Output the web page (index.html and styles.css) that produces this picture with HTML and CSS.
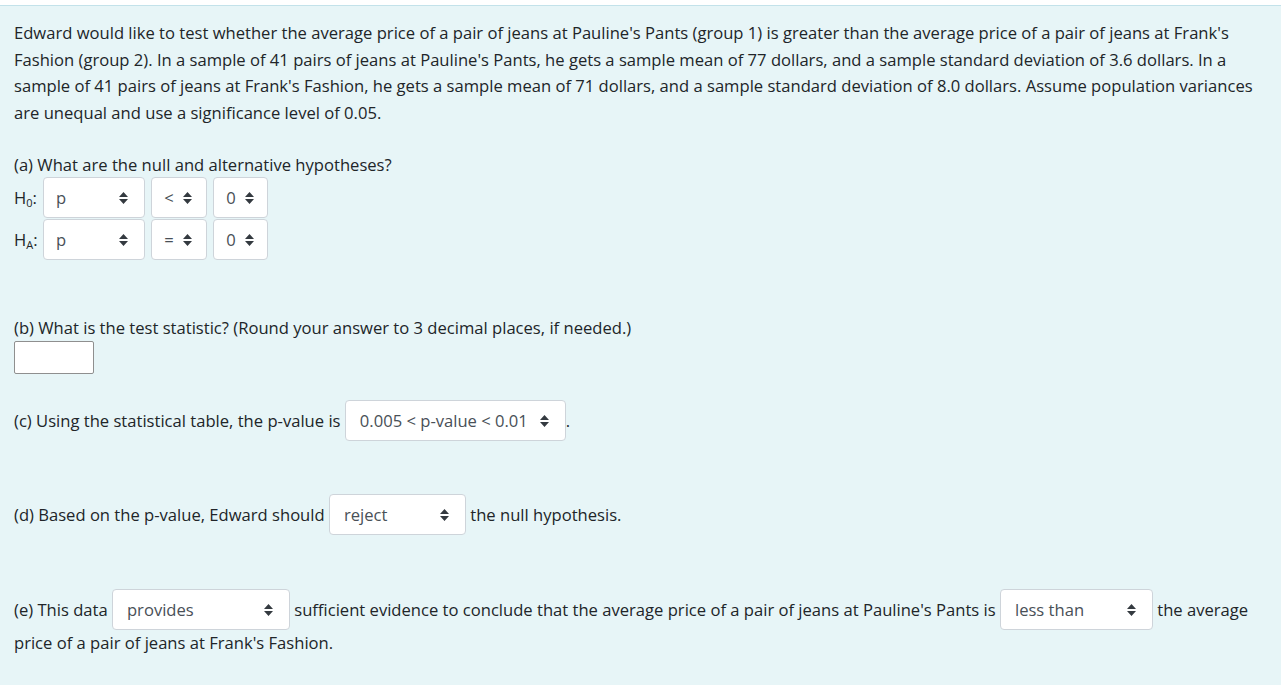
FILE: index.html
```html
<!DOCTYPE html>
<html lang="en">
<head>
<meta charset="utf-8">
<title>Hypothesis test</title>
<link rel="stylesheet" href="styles.css">
</head>
<body>
<div class="panel">
  <p class="intro">Edward would like to test whether the average price of a pair of jeans at Pauline's Pants (group 1) is greater than the average price of a pair of jeans at Frank's Fashion (group 2). In a sample of 41 pairs of jeans at Pauline's Pants, he gets a sample mean of 77 dollars, and a sample standard deviation of 3.6 dollars. In a sample of 41 pairs of jeans at Frank's Fashion, he gets a sample mean of 71 dollars, and a sample standard deviation of 8.0 dollars. Assume population variances are unequal and use a significance level of 0.05.</p>

  <div class="part-a">
    <p class="line">(a) What are the null and alternative hypotheses?</p>
    <div class="hrow first">
      <span class="hlabel">H<sub>0</sub>:</span>
      <div class="sel w-var"><span class="val">p</span><svg class="arr" width="9" height="12" viewBox="0 0 9 12"><path d="M4.5 0L9 5H0Z M4.5 12L0 7H9Z"/></svg></div>
      <div class="sel w-op"><span class="val center">&lt;</span><svg class="arr" width="9" height="12" viewBox="0 0 9 12"><path d="M4.5 0L9 5H0Z M4.5 12L0 7H9Z"/></svg></div>
      <div class="sel w-num"><span class="val center">0</span><svg class="arr" width="9" height="12" viewBox="0 0 9 12"><path d="M4.5 0L9 5H0Z M4.5 12L0 7H9Z"/></svg></div>
    </div>
    <div class="hrow">
      <span class="hlabel">H<sub>A</sub>:</span>
      <div class="sel w-var"><span class="val">p</span><svg class="arr" width="9" height="12" viewBox="0 0 9 12"><path d="M4.5 0L9 5H0Z M4.5 12L0 7H9Z"/></svg></div>
      <div class="sel w-op"><span class="val center">=</span><svg class="arr" width="9" height="12" viewBox="0 0 9 12"><path d="M4.5 0L9 5H0Z M4.5 12L0 7H9Z"/></svg></div>
      <div class="sel w-num"><span class="val center">0</span><svg class="arr" width="9" height="12" viewBox="0 0 9 12"><path d="M4.5 0L9 5H0Z M4.5 12L0 7H9Z"/></svg></div>
    </div>
  </div>

  <div class="part-b">
    <p class="line">(b) What is the test statistic? (Round your answer to 3 decimal places, if needed.)</p>
    <div class="answer-box"></div>
  </div>

  <p class="part part-c">(c) Using the statistical table, the p-value is <span class="sel inl w-p"><span class="val">0.005 &lt; p-value &lt; 0.01</span><svg class="arr" width="9" height="12" viewBox="0 0 9 12"><path d="M4.5 0L9 5H0Z M4.5 12L0 7H9Z"/></svg></span>.</p>

  <p class="part part-d">(d) Based on the p-value, Edward should <span class="sel inl w-rej"><span class="val">reject</span><svg class="arr" width="9" height="12" viewBox="0 0 9 12"><path d="M4.5 0L9 5H0Z M4.5 12L0 7H9Z"/></svg></span> the null hypothesis.</p>

  <p class="part part-e">(e) This data <span class="sel inl w-prov"><span class="val">provides</span><svg class="arr" width="9" height="12" viewBox="0 0 9 12"><path d="M4.5 0L9 5H0Z M4.5 12L0 7H9Z"/></svg></span> sufficient evidence to conclude that the average price of a pair of jeans at Pauline's Pants is <span class="sel inl w-less"><span class="val">less than</span><svg class="arr" width="9" height="12" viewBox="0 0 9 12"><path d="M4.5 0L9 5H0Z M4.5 12L0 7H9Z"/></svg></span> the average price of a pair of jeans at Frank's Fashion.</p>
</div>
</body>
</html>
```

FILE: styles.css
```css
html, body {
  margin: 0;
  padding: 0;
  background: #ffffff;
}

body {
  font-family: "Open Sans", "Noto Sans", sans-serif;
  font-size: 16.6px;
  color: #212529;
}

.panel {
  margin-top: 5px;
  border-top: 1px solid #c3e2ea;
  background: #e7f5f7;
  padding: 14px 14px 40px 14px;
  min-height: 640px;
  box-sizing: border-box;
}

p {
  margin: 0;
}

.intro {
  line-height: 26.5px;
}

.line {
  line-height: 26px;
}

.part-a {
  margin-top: 26px;
}

.hrow {
  display: flex;
  align-items: center;
  gap: 6px;
  margin-bottom: 1px;
}

.hrow.first {
  margin-top: -1px;
}

.hlabel {
  width: 23px;
  line-height: 41px;
}

.hlabel sub {
  font-size: 11px;
  vertical-align: -3px;
  line-height: 0;
}

.sel {
  display: flex;
  align-items: center;
  box-sizing: border-box;
  height: 41px;
  background: #ffffff;
  border: 1px solid #ced4da;
  border-radius: 4px;
  padding: 0 16px 0 12px;
  color: #495057;
  line-height: 20px;
}

.sel .val {
  flex: 1;
  white-space: nowrap;
  margin-top: 1px;
}

.sel .val.center {
  text-align: center;
  padding-right: 5px;
}

.sel .arr {
  fill: #343a40;
  flex: none;
}

.sel.inl {
  display: inline-flex;
  vertical-align: baseline;
  padding-left: 14px;
}

.w-var { width: 102px; }
.w-op { width: 56px; padding-left: 8px; padding-right: 14px; }
.w-num { width: 55px; padding-left: 8px; padding-right: 13px; }
.w-p { width: 221px; }
.w-rej { width: 137px; }
.w-prov { width: 178px; }
.w-less { width: 153px; }

.part-b {
  margin-top: 55px;
}

.answer-box {
  width: 80px;
  height: 33px;
  box-sizing: border-box;
  background: #ffffff;
  border: 1px solid #8f8f8f;
  border-radius: 2px;
}

.part {
  line-height: 26.5px;
}

.part-c {
  margin-top: 26px;
}

.part-d {
  margin-top: 53px;
}

.part-e {
  margin-top: 54px;
  line-height: 26.5px;
}
```
